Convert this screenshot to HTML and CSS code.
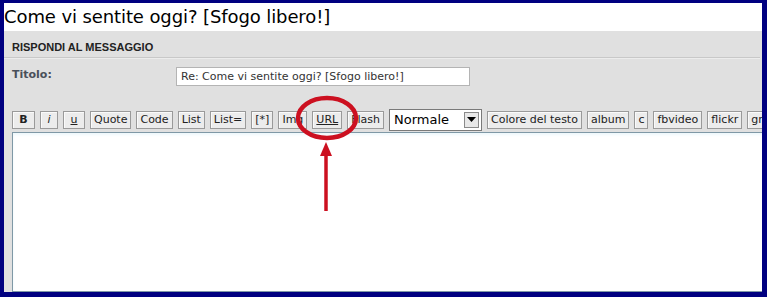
FILE: index.html
```html
<!DOCTYPE html>
<html>
<head>
<meta charset="utf-8">
<link rel="stylesheet" href="styles.css">
</head>
<body>
<div class="frame">
  <div class="topic">Come vi sentite oggi? [Sfogo libero!]</div>
  <div class="panel">
    <div class="section-head">RISPONDI AL MESSAGGIO</div>
    <div class="title-row">
      <span class="label">Titolo:</span>
      <div class="input">Re: Come vi sentite oggi? [Sfogo libero!]</div>
    </div>
    <div class="toolbar">
      <span class="btn b">B</span>
      <span class="btn i">i</span>
      <span class="btn u">u</span>
      <span class="btn">Quote</span>
      <span class="btn">Code</span>
      <span class="btn">List</span>
      <span class="btn">List=</span>
      <span class="btn">[*]</span>
      <span class="btn">Img</span>
      <span class="btn url">URL</span>
      <span class="btn">Flash</span>
      <span class="select">Normale<span class="caret"><svg width="9" height="5" viewBox="0 0 9 5"><path d="M0 0H9L4.5 5Z" fill="#000"/></svg></span></span>
      <span class="btn">Colore del testo</span>
      <span class="btn">album</span>
      <span class="btn">c</span>
      <span class="btn">fbvideo</span>
      <span class="btn">flickr</span>
      <span class="btn">gr</span>
    </div>
    <div class="textarea"></div>
  </div>
  <svg class="annot" width="767" height="297" viewBox="0 0 767 297">
    <ellipse cx="327" cy="118" rx="29" ry="20" fill="none" stroke="#cc1020" stroke-width="4.5"/>
    <line x1="326" y1="152" x2="326" y2="211" stroke="#cc1020" stroke-width="3.5"/>
    <path d="M320 156 L326 142 L332 156 Z" fill="#cc1020"/>
  </svg>
</div>
</body>
</html>
```
FILE: styles.css
```css
html, body {
  margin: 0;
  padding: 0;
  background: #000080;
}
.frame {
  position: relative;
  width: 767px;
  height: 297px;
  box-sizing: border-box;
  border-top: 3px solid #000080;
  border-left: 4px solid #000080;
  border-right: 5px solid #000080;
  border-bottom: 5px solid #000080;
  overflow: hidden;
  display: flex;
  flex-direction: column;
  background: #fff;
}
.topic {
  height: 28px;
  flex: none;
  background: #fff;
  font-family: "DejaVu Sans", Verdana, sans-serif;
  font-size: 18px;
  line-height: 28px;
  color: #000;
  white-space: nowrap;
  letter-spacing: -0.1px;
}
.panel {
  flex: 1;
  background: #e0e0e0;
  display: flex;
  flex-direction: column;
  min-height: 0;
}
.section-head {
  height: 27px;
  flex: none;
  box-sizing: border-box;
  padding: 10px 0 0 8px;
  font-family: "Liberation Sans", Arial, sans-serif;
  font-weight: bold;
  font-size: 11px;
  color: #222;
  border-bottom: 1px solid #c8c8c8;
  box-shadow: 0 1px 0 #ececec;
  margin-right: 2px;
}
.title-row {
  display: flex;
  align-items: flex-start;
  padding: 9px 0 0 8px;
  height: 44px;
  flex: none;
  box-sizing: border-box;
}
.label {
  width: 164px;
  font-family: "DejaVu Sans", Verdana, sans-serif;
  font-weight: bold;
  font-size: 11px;
  color: #4a4f5a;
  padding-top: 1px;
}
.input {
  width: 294px;
  height: 19px;
  box-sizing: border-box;
  border: 1px solid #b4b4b4;
  background: #fff;
  font-family: "DejaVu Sans", Verdana, sans-serif;
  font-size: 11px;
  line-height: 17px;
  padding-left: 4px;
  color: #333;
  white-space: nowrap;
}
.toolbar {
  display: flex;
  align-items: center;
  gap: 5px;
  padding: 6px 0 0 8px;
  height: 29px;
  flex: none;
  box-sizing: border-box;
  white-space: nowrap;
}
.btn {
  flex: none;
  height: 18px;
  box-sizing: border-box;
  border: 1px solid #9a9a9a;
  box-shadow: inset 1px 1px 0 #fafafa;
  background: #ececec;
  font-family: "DejaVu Sans", Verdana, sans-serif;
  font-size: 11px;
  line-height: 16px;
  color: #222;
  padding: 0 3px;
}
.btn.b { font-weight: bold; width: 23px; text-align: center; }
.btn.i { font-style: italic; width: 18px; text-align: center; }
.btn.u { text-decoration: underline; width: 22px; text-align: center; }
.btn.url { text-decoration: underline; }
.select {
  flex: none;
  position: relative;
  width: 93px;
  height: 22px;
  box-sizing: border-box;
  border: 1px solid #7a7a7a;
  background: #fff;
  font-family: "DejaVu Sans", Verdana, sans-serif;
  font-size: 13px;
  line-height: 20px;
  padding-left: 4px;
  color: #000;
}
.caret {
  position: absolute;
  right: 2px;
  top: 2px;
  width: 15px;
  height: 16px;
  box-sizing: border-box;
  border: 1px solid #8a8a8a;
  background: #e8e8e8;
  display: flex;
  align-items: center;
  justify-content: center;
}
.textarea {
  margin: 1px 0 0 8px;
  flex: 1;
  width: 900px;
  background: #fff;
  border: 1px solid #7f98a6;
  box-shadow: inset 0 2px 3px #eef8fc;
}
.annot {
  position: absolute;
  left: -4px;
  top: -3px;
  pointer-events: none;
}
```
